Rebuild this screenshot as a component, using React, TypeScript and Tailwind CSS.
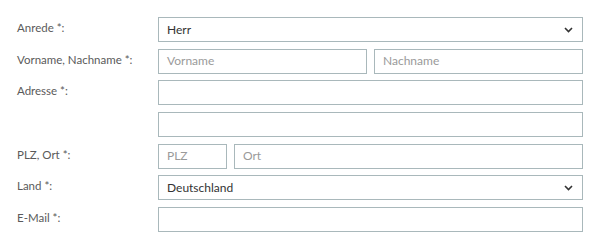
import React from "react";

const font = { fontFamily: "Lato, 'Open Sans', sans-serif" };

function Chevron() {
  return (
    <svg width="9" height="6" viewBox="0 0 9 6" className="absolute right-[9px] top-1/2 -translate-y-1/2">
      <path d="M1 1 L4.5 4.5 L8 1" fill="none" stroke="#333" strokeWidth="1.6" />
    </svg>
  );
}

function Box({ children, className = "", text, placeholder, select }: { children?: React.ReactNode; className?: string; text?: string; placeholder?: string; select?: boolean }) {
  return (
    <div className={`relative h-[25px] border border-[#a9b8bb] bg-white flex items-center pl-[8px] text-[12px] ${className}`}>
      {text && <span className="text-[#333]">{text}</span>}
      {placeholder && <span className="text-[#9a9a9a]">{placeholder}</span>}
      {select && <Chevron />}
      {children}
    </div>
  );
}

function Row({ label, children }: { label?: string; children: React.ReactNode }) {
  return (
    <div className="flex">
      <div className="w-[141px] shrink-0 text-[11.5px] text-[#5a5a5a] pt-[3px] leading-[16px]">{label}</div>
      <div className="w-[425px] flex gap-[7px]">{children}</div>
    </div>
  );
}

export default function App() {
  return (
    <div className="w-[600px] h-[249px] bg-white pl-[17px] pt-[17px] flex flex-col gap-[6.67px]" style={font}>
      <Row label="Anrede *:">
        <Box className="flex-1" text="Herr" select />
      </Row>
      <Row label="Vorname, Nachname *:">
        <Box className="flex-1" placeholder="Vorname" />
        <Box className="flex-1" placeholder="Nachname" />
      </Row>
      <Row label="Adresse *:">
        <Box className="flex-1" />
      </Row>
      <Row>
        <Box className="flex-1" />
      </Row>
      <Row label="PLZ, Ort *:">
        <Box className="w-[69px]" placeholder="PLZ" />
        <Box className="flex-1" placeholder="Ort" />
      </Row>
      <Row label="Land *:">
        <Box className="flex-1" text="Deutschland" select />
      </Row>
      <Row label="E-Mail *:">
        <Box className="flex-1" />
      </Row>
    </div>
  );
}
